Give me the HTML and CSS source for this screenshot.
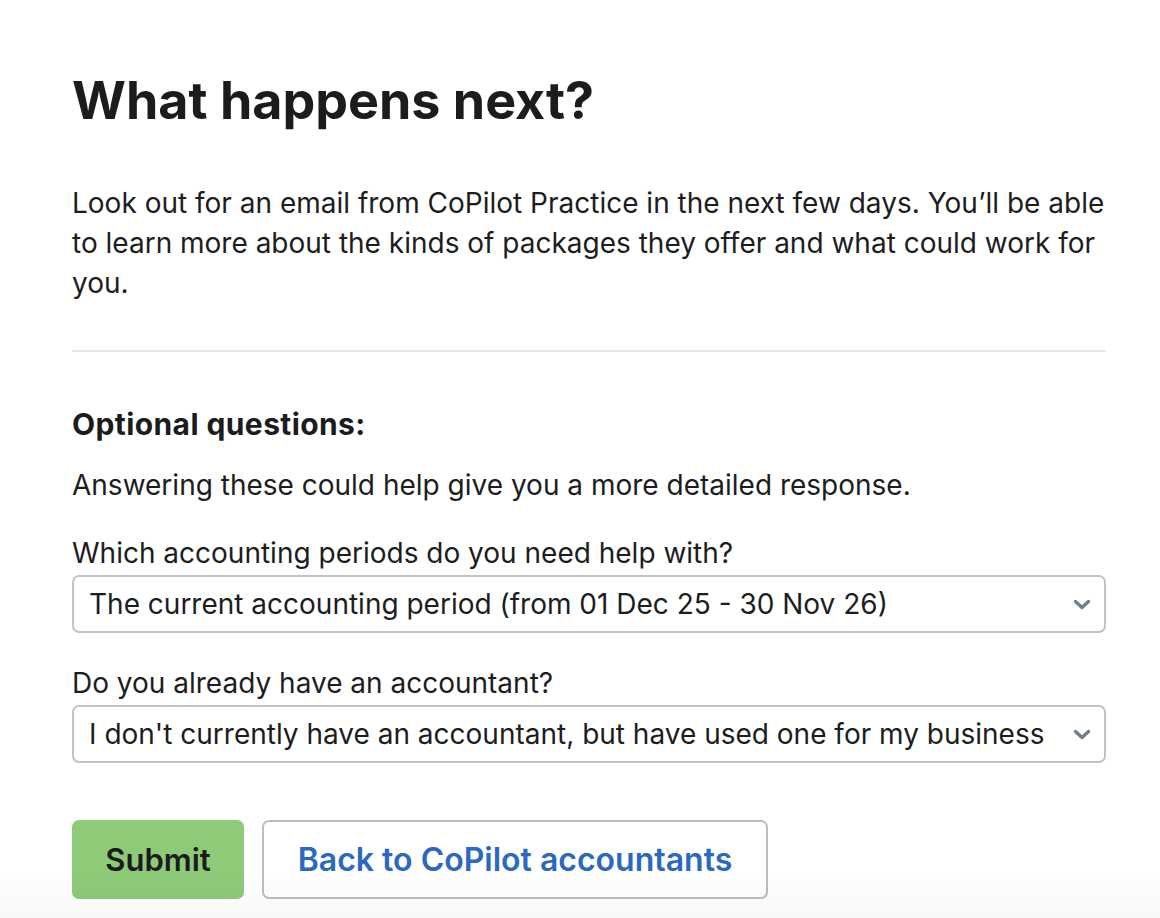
FILE: index.html
```html
<!DOCTYPE html>
<html lang="en">
<head>
<meta charset="utf-8">
<title>What happens next?</title>
<link rel="stylesheet" href="styles.css">
</head>
<body>
<main class="page">
  <h1 class="title">What happens next?</h1>
  <p class="intro">Look out for an email from CoPilot Practice in the next few days. You’ll be able to learn more about the kinds of packages they offer and what could work for you.</p>
  <hr class="divider">
  <h2 class="subtitle">Optional questions:</h2>
  <p class="hint">Answering these could help give you a more detailed response.</p>
  <div class="field">
    <label class="label">Which accounting periods do you need help with?</label>
    <div class="select">
      <span class="select-text">The current accounting period (from 01 Dec 25 - 30 Nov 26)</span>
      <svg class="chev" viewBox="0 0 18 11" width="18" height="11"><path d="M2.5 2.5l6.5 6 6.5-6" fill="none" stroke="#737d86" stroke-width="3.4" stroke-linecap="round" stroke-linejoin="round"/></svg>
    </div>
  </div>
  <div class="field field-second">
    <label class="label">Do you already have an accountant?</label>
    <div class="select">
      <span class="select-text">I don't currently have an accountant, but have used one for my business</span>
      <svg class="chev" viewBox="0 0 18 11" width="18" height="11"><path d="M2.5 2.5l6.5 6 6.5-6" fill="none" stroke="#737d86" stroke-width="3.4" stroke-linecap="round" stroke-linejoin="round"/></svg>
    </div>
  </div>
  <div class="actions">
    <button class="btn btn-submit">Submit</button>
    <button class="btn btn-back">Back to CoPilot accountants</button>
  </div>
</main>
<div class="fade"></div>
</body>
</html>
```
FILE: styles.css
```css
html, body {
  margin: 0;
  padding: 0;
  background: #ffffff;
}
body {
  font-family: "Inter", "Noto Sans", sans-serif;
  color: #1d1d1f;
}
.page {
  padding: 65px 54px 0 72px;
}
.title {
  margin: 0;
  font-size: 52px;
  line-height: 72px;
  font-weight: 700;
  color: #1c1c1e;
}
.intro {
  margin: 46px 0 0;
  font-size: 28px;
  line-height: 40px;
}
.divider {
  margin: 47px 0 0;
  height: 0;
  border: 0;
  border-top: 2px solid #e6e6ea;
}
.subtitle {
  margin: 52px 0 0;
  font-size: 30px;
  line-height: 40px;
  font-weight: 700;
  letter-spacing: 0.4px;
  color: #1c1c1e;
}
.hint {
  margin: 21px 0 0;
  font-size: 28px;
  line-height: 40px;
}
.field {
  margin-top: 28px;
  display: flex;
  flex-direction: column;
}
.field-second {
  margin-top: 30px;
}
.label {
  font-size: 28px;
  line-height: 40px;
}
.select {
  margin-top: 2px;
  height: 58px;
  border: 2px solid #c0c4c9;
  border-radius: 7px;
  display: flex;
  align-items: center;
  justify-content: space-between;
  padding: 0 13px 0 15px;
  box-sizing: border-box;
}
.select-text {
  font-size: 28px;
  line-height: 40px;
  white-space: nowrap;
}
.chev {
  flex: none;
}
.actions {
  margin-top: 57px;
  display: flex;
  gap: 18px;
}
.btn {
  font-family: inherit;
  height: 79px;
  border-radius: 7px;
  font-size: 31px;
  font-weight: 600;
  cursor: pointer;
  padding: 0;
}
.btn-submit {
  background: #8ecb79;
  border: 0;
  color: #1c1c1e;
  width: 172px;
}
.btn-back {
  background: #ffffff;
  border: 2px solid #babec4;
  color: #2b68c1;
  width: 506px;
  font-size: 32px;
}
.fade {
  position: fixed;
  left: 0;
  right: 0;
  bottom: 0;
  height: 50px;
  background: linear-gradient(to bottom, rgba(0,0,0,0), rgba(0,0,0,0.028));
  pointer-events: none;
}
```
